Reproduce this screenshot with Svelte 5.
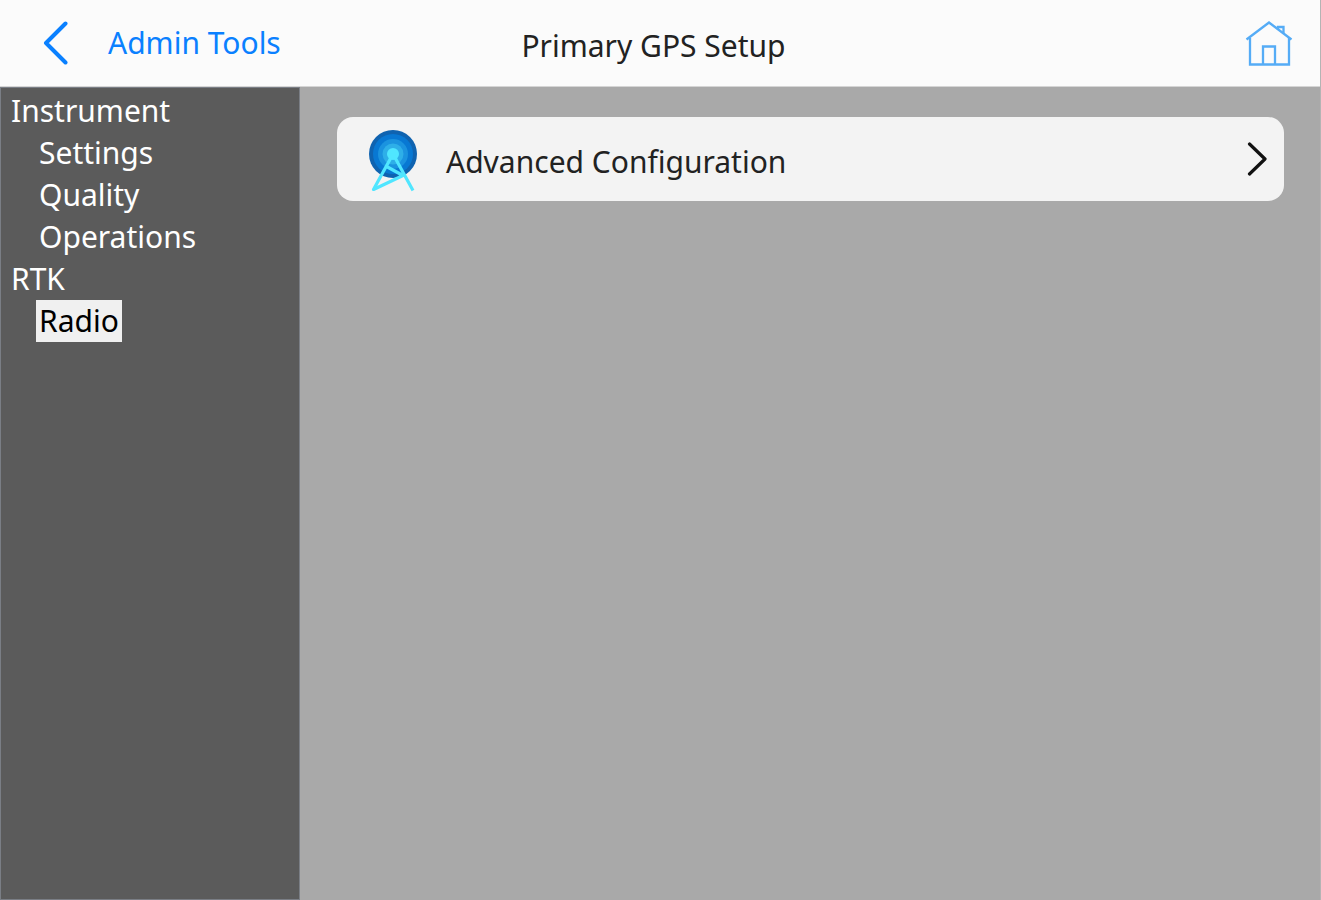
<script>
  const groups = [
    { name: 'Instrument', items: ['Settings', 'Quality', 'Operations'] },
    { name: 'RTK', items: ['Radio'] }
  ];
  let selected = $state('Radio');
</script>

<div class="screen">
  <header>
    <button class="back">
      <svg width="26" height="44" viewBox="0 0 26 44" aria-hidden="true">
        <path d="M23.500 2.500 4 22 23.500 41.500" fill="none" stroke="#0a80ff" stroke-width="4" stroke-linecap="round" stroke-linejoin="round" />
      </svg>
      <span>Admin Tools</span>
    </button>
    <h1>Primary GPS Setup</h1>
    <button class="home" aria-label="Home">
      <svg width="48" height="48" viewBox="0 0 48 48" aria-hidden="true">
        <g fill="none" stroke="#55acf6" stroke-width="2.300">
          <path d="M1.500 20.500 24 3.500 46.500 20.500" />
          <path d="M5 19V45.500H44V19" />
          <path d="M18 45V27.500H30V45" />
          <path d="M33 10.500V8H38.500V14.500" />
        </g>
      </svg>
    </button>
  </header>
  <div class="body">
    <nav>
      {#each groups as group}
        <button class="item" class:selected={selected === group.name} onclick={() => (selected = group.name)}>{group.name}</button>
        <div class="children">
          {#each group.items as item}
            <button class="item" class:selected={selected === item} onclick={() => (selected = item)}>{item}</button>
          {/each}
        </div>
      {/each}
    </nav>
    <main>
      <button class="card">
        <svg width="50" height="64" viewBox="0 0 50 64" aria-hidden="true">
          <circle cx="25" cy="25" r="24" fill="#0f63b0" />
          <circle cx="25" cy="25" r="20" fill="#0878d3" />
          <circle cx="25" cy="25" r="15" fill="#1b93df" />
          <circle cx="25" cy="25" r="10.500" fill="#2eafe8" />
          <circle cx="25" cy="25" r="6" fill="#50e6ff" />
          <path d="M25 25 5.500 60.500 35 46.500 18.500 37.500M25 25 45 61.500" fill="none" stroke="#50e6ff" stroke-width="3.200" stroke-linejoin="round" />
        </svg>
        <span>Advanced Configuration</span>
        <svg class="chevron" width="20" height="36" viewBox="0 0 20 36" aria-hidden="true">
          <path d="M2.500 3 18 18 2.500 33" fill="none" stroke="#111" stroke-width="3.200" stroke-linecap="round" stroke-linejoin="round" />
        </svg>
      </button>
    </main>
  </div>
</div>

<style>
  .screen {
    min-height: 100vh;
    display: flex;
    flex-direction: column;
    background: #a9a9a9;
    font-family: "Noto Sans", "Segoe UI", sans-serif;
    font-size: 30px;
    box-sizing: border-box;
    border-right: 1px solid #b4b4b4;
  }
  button {
    font: inherit;
    color: inherit;
    background: none;
    border: 0;
    padding: 0;
    cursor: pointer;
    text-align: left;
  }
  svg {
    display: block;
    flex: none;
  }
  header {
    display: grid;
    grid-template-columns: 1fr auto 1fr;
    align-items: center;
    height: 87px;
    box-sizing: border-box;
    padding: 0 27px 0 14px;
    background: #fbfbfb;
    border-bottom: 1px solid #d5d5d5;
  }
  .back {
    display: flex;
    align-items: center;
    gap: 40px;
    padding-left: 28px;
    color: #0a80ff;
    line-height: 46px;
  }
  h1 {
    margin: 6px 0 0;
    font-size: 30px;
    line-height: 44px;
    font-weight: 400;
    color: #222;
  }
  .home {
    justify-self: end;
  }
  .body {
    flex: 1;
    display: flex;
  }
  nav {
    width: 300px;
    box-sizing: border-box;
    padding: 2px 7px;
    background: #5b5b5b;
    border: 1px solid #7a7e85;
    display: flex;
    flex-direction: column;
    align-items: flex-start;
    color: #fff;
  }
  .children {
    display: flex;
    flex-direction: column;
    align-items: flex-start;
    padding-left: 28px;
  }
  .item {
    display: block;
    padding: 0 3px;
    line-height: 42px;
  }
  .selected {
    background: #f0f0f0;
    color: #000;
  }
  main {
    flex: 1;
    padding: 30px 36px 30px 37px;
  }
  .card {
    display: flex;
    align-items: center;
    width: 100%;
    height: 84px;
    box-sizing: border-box;
    padding: 4px 17px 0 31px;
    border-radius: 16px;
    background: #f3f3f3;
    color: #222;
    gap: 28px;
  }
  .chevron {
    margin: 0 0 4px auto;
  }
</style>
